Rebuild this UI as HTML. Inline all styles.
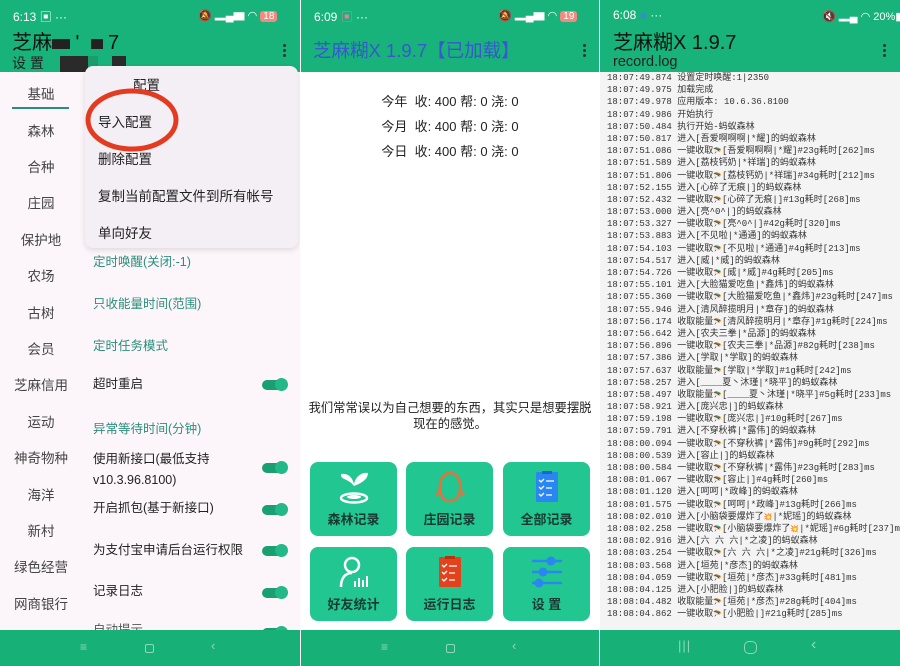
<!DOCTYPE html>
<html><head><meta charset="utf-8"><style>
*{margin:0;padding:0;box-sizing:border-box}
body{width:900px;height:666px;overflow:hidden;background:#fff;font-family:"Liberation Sans","Noto Sans CJK SC",sans-serif;position:relative}
.p{position:absolute;top:0;height:666px;width:300px;overflow:hidden}
.a{position:absolute;white-space:nowrap}
.hdr{position:absolute;left:0;top:0;width:300px;height:72px;background:#17b37a}
.nav{position:absolute;left:0;top:630px;width:300px;height:36px;background:#17b077}
.st{position:absolute;top:8px;left:13px;color:#fff;font-size:12px}
.dots{position:absolute;right:14px;top:42px;width:3px}
.dots i{display:block;width:3px;height:3px;background:#333;border-radius:50%;margin-bottom:2px}
.side{position:absolute;left:0;width:82px;text-align:center;font-size:13.5px;color:#444}
.sec{position:absolute;left:93px;font-size:12.5px;color:#2b8f7c}
.it{position:absolute;left:93px;font-size:12.5px;color:#222;line-height:21px}
.tg{position:absolute;left:262px;width:24px;height:10px;border-radius:5px;background:#1aa070}
.tg:after{content:"";position:absolute;right:-2px;top:-2px;width:13px;height:13px;border-radius:50%;background:#23b887}
.tile{position:absolute;width:87px;height:74px;background:#22c690;border-radius:8px}
.tile span{position:absolute;left:0;width:100%;top:47px;text-align:center;font-size:13px;color:#173b33;font-weight:bold}
.tile svg{position:absolute;left:28px;top:8px}
.log{position:absolute;left:7px;top:72px;font-family:"Liberation Mono","Noto Sans CJK SC",monospace;font-size:9px;color:#333;white-space:pre}
.log div{height:12.2px;line-height:12.2px;overflow:visible}
.log b{font-weight:normal;font-size:7px;line-height:0}
</style></head><body>

<!-- Panel 1 -->
<div class="p" style="left:0;background:#fcf6fa">
<div class="hdr"></div>
<div class="st">6:13 ▣ ···</div>
<div class="a" style="left:198px;top:7px;color:#fff;font-size:11px">🔕 ▂▄▆ ◠ <span style="background:#f28a80;border-radius:3px;padding:0 3px;font-size:10px">18</span></div>
<div class="a" style="left:12px;top:26px;font-size:20px;color:#111">芝麻<span style="display:inline-block;width:18px;height:10px;background:#222"></span> ' &nbsp;<span style="display:inline-block;width:12px;height:10px;background:#222"></span> 7</div>
<div class="a" style="left:12px;top:53px;font-size:14px;color:#222">设 置 <span style="display:inline-block;width:28px;height:16px;background:#2a2a2a;vertical-align:middle;margin-left:12px"></span><span style="display:inline-block;width:10px;height:16px;background:#1c9b6c;vertical-align:middle"></span><span style="display:inline-block;width:14px;height:16px;background:#2a2a2a;vertical-align:middle;margin-left:14px"></span></div>
<div class="dots" style="top:44px"><i></i><i></i><i></i></div>
<div style="position:absolute;left:12px;top:107px;width:57px;height:2px;background:#2a8f7a"></div>
<div class="side" style="top:83px">基础</div>
<div class="side" style="top:120px">森林</div>
<div class="side" style="top:156px">合种</div>
<div class="side" style="top:192px">庄园</div>
<div class="side" style="top:229px">保护地</div>
<div class="side" style="top:265px">农场</div>
<div class="side" style="top:302px">古树</div>
<div class="side" style="top:338px">会员</div>
<div class="side" style="top:374px">芝麻信用</div>
<div class="side" style="top:411px">运动</div>
<div class="side" style="top:447px">神奇物种</div>
<div class="side" style="top:484px">海洋</div>
<div class="side" style="top:520px">新村</div>
<div class="side" style="top:556px">绿色经营</div>
<div class="side" style="top:593px">网商银行</div>
<div style="position:absolute;left:85px;top:66px;width:213px;height:182px;background:#f4eff4;border-radius:8px;box-shadow:0 2px 6px rgba(0,0,0,.12)"></div>
<div class="a" style="left:133px;top:74px;font-size:13.5px;color:#222">配置</div>
<div class="a" style="left:98px;top:111px;font-size:13.5px;color:#222">导入配置</div>
<div class="a" style="left:98px;top:148px;font-size:13.5px;color:#222">删除配置</div>
<div class="a" style="left:98px;top:185px;font-size:13.5px;color:#222">复制当前配置文件到所有帐号</div>
<div class="a" style="left:98px;top:222px;font-size:13.5px;color:#222">单向好友</div>
<svg class="a" style="left:84px;top:86px" width="96" height="68"><ellipse cx="48" cy="34" rx="44" ry="29" fill="none" stroke="#e33a22" stroke-width="5"/></svg>
<div class="sec" style="top:251px">定时唤醒(关闭:-1)</div>
<div class="sec" style="top:293px">只收能量时间(范围)</div>
<div class="sec" style="top:335px">定时任务模式</div>
<div class="it" style="top:374px">超时重启</div><div class="tg" style="top:380px"></div>
<div class="sec" style="top:418px">异常等待时间(分钟)</div>
<div class="it" style="top:449px">使用新接口(最低支持<br>v10.3.96.8100)</div><div class="tg" style="top:463px"></div>
<div class="it" style="top:498px">开启抓包(基于新接口)</div><div class="tg" style="top:505px"></div>
<div class="it" style="top:540px">为支付宝申请后台运行权限</div><div class="tg" style="top:546px"></div>
<div class="it" style="top:581px">记录日志</div><div class="tg" style="top:588px"></div>
<div class="it" style="top:620px;color:#555">自动提示</div><div class="tg" style="top:628px"></div>
<div class="nav"></div>
<div class="a" style="left:80px;top:640px;color:#8fd9b9;font-size:12px">≡</div>
<div class="a" style="left:145px;top:644px;width:9px;height:9px;border:1.5px solid #8fd9b9;border-radius:2px"></div>
<div class="a" style="left:211px;top:638px;color:#8fd9b9;font-size:13px">‹</div>
</div>

<!-- Panel 2 -->
<div class="p" style="left:301px;width:298px">
<div class="hdr"></div>
<div class="st">6:09 <span style="color:#f07aa0">▣</span> ···</div>
<div class="a" style="left:197px;top:7px;color:#fff;font-size:11px">🔕 ▂▄▆ ◠ <span style="background:#f28a80;border-radius:3px;padding:0 3px;font-size:10px">19</span></div>
<div class="a" style="left:12px;top:37px;font-size:18.5px;color:#3a56d0">芝麻糊X 1.9.7【已加载】</div>
<div class="dots" style="top:44px;right:13px"><i></i><i></i><i></i></div>
<div class="a" style="left:0;width:298px;text-align:center;top:89px;font-size:13px;color:#222;line-height:25px">今年&nbsp; 收: 400 帮: 0 浇: 0<br>今月&nbsp; 收: 400 帮: 0 浇: 0<br>今日&nbsp; 收: 400 帮: 0 浇: 0</div>
<div class="a" style="left:0;width:298px;text-align:center;top:400px;font-size:12.3px;color:#222;line-height:16px;white-space:normal;padding:0 4px">我们常常误以为自己想要的东西，其实只是想要摆脱现在的感觉。</div>
<div class="tile" style="left:9px;top:462px"><svg width="32" height="34" viewBox="0 0 32 34"><path d="M16 26 V14 M16 16 C10 8 2 10 3 4 C9 3 14 6 16 14 M16 14 C18 5 25 2 30 3 C30 9 24 13 16 16" fill="#fff"/><ellipse cx="16" cy="28" rx="13" ry="4.5" fill="none" stroke="#fff" stroke-width="2.5"/><ellipse cx="16" cy="27" rx="7" ry="2" fill="#fff"/></svg><span>森林记录</span></div>
<div class="tile" style="left:105px;top:462px"><svg width="32" height="34" viewBox="0 0 32 34"><path d="M16 3 C8 3 5 12 6 20 C7 28 11 31 16 31 C21 31 25 28 26 20 C27 12 24 3 16 3Z M6 20 L2 26 M26 20 L30 26" fill="none" stroke="#e8703a" stroke-width="2.5"/></svg><span>庄园记录</span></div>
<div class="tile" style="left:202px;top:462px"><svg width="32" height="34" viewBox="0 0 32 34"><rect x="5" y="2" width="22" height="30" rx="1" fill="#2a86f0"/><rect x="11" y="1" width="10" height="3" fill="#1b66c8"/><path d="M8 10l2 2 3-3M8 17l2 2 3-3M8 24l2 2 3-3M15 11h8M15 18h6M15 25h6" stroke="#fff" stroke-width="1.3" fill="none"/></svg><span>全部记录</span></div>
<div class="tile" style="left:9px;top:547px"><svg width="32" height="34" viewBox="0 0 32 34"><circle cx="14" cy="10" r="7" fill="none" stroke="#fff" stroke-width="2.5"/><path d="M3 32 C3 22 8 18 14 18" fill="none" stroke="#fff" stroke-width="2.5"/><path d="M17 32v-6M21 32v-9M25 32v-7M29 32v-11" stroke="#fff" stroke-width="2"/></svg><span>好友统计</span></div>
<div class="tile" style="left:105px;top:547px"><svg width="32" height="34" viewBox="0 0 32 34"><rect x="5" y="2" width="22" height="30" rx="1" fill="#e2431c"/><rect x="11" y="1" width="10" height="3" fill="#b83010"/><path d="M8 10l2 2 3-3M8 17l2 2 3-3M8 24l2 2 3-3M15 11h8M15 18h6M15 25h6" stroke="#fff" stroke-width="1.3" fill="none"/></svg><span>运行日志</span></div>
<div class="tile" style="left:202px;top:547px"><svg width="32" height="34" viewBox="0 0 32 34"><path d="M1 6h30M1 17h30M1 28h30" stroke="#2a86f0" stroke-width="2.5"/><circle cx="20" cy="6" r="4.5" fill="#2a86f0"/><circle cx="12" cy="17" r="4.5" fill="#2a86f0"/><circle cx="8" cy="28" r="4.5" fill="#2a86f0"/></svg><span>设 置</span></div>
<div class="nav"></div>
<div class="a" style="left:80px;top:640px;color:#8fd9b9;font-size:12px">≡</div>
<div class="a" style="left:145px;top:644px;width:9px;height:9px;border:1.5px solid #8fd9b9;border-radius:2px"></div>
<div class="a" style="left:211px;top:638px;color:#8fd9b9;font-size:13px">‹</div>
</div>

<!-- Panel 3 -->
<div class="p" style="left:600px;background:#f4f4f4">
<div class="hdr"></div>
<div class="st">6:08 <span style="color:#4a7ce8">●</span> ···</div>
<div class="a" style="left:222px;top:8px;color:#fff;font-size:11px">🔇 ▂▄ ◠ 20%▮</div>
<div class="a" style="left:13px;top:26px;font-size:20px;color:#111">芝麻糊X 1.9.7</div>
<div class="a" style="left:13px;top:54px;font-size:14.5px;color:#222">record.log</div>
<div class="dots" style="top:44px"><i></i><i></i><i></i></div>
<div class="log"><div>18:07:49.874 设置定时唤醒:1|2350</div><div>18:07:49.975 加载完成</div><div>18:07:49.978 应用版本: 10.6.36.8100</div><div>18:07:49.986 开始执行</div><div>18:07:50.484 执行开始-蚂蚁森林</div><div>18:07:50.817 进入[吾爱啊啊啊|*耀]的蚂蚁森林</div><div>18:07:51.086 一键收取<b>🪂</b>[吾爱啊啊啊|*耀]#23g耗时[262]ms</div><div>18:07:51.589 进入[荔枝钙奶|*祥瑞]的蚂蚁森林</div><div>18:07:51.806 一键收取<b>🪂</b>[荔枝钙奶|*祥瑞]#34g耗时[212]ms</div><div>18:07:52.155 进入[心碎了无痕|]的蚂蚁森林</div><div>18:07:52.432 一键收取<b>🪂</b>[心碎了无痕|]#13g耗时[268]ms</div><div>18:07:53.000 进入[亮^0^|]的蚂蚁森林</div><div>18:07:53.327 一键收取<b>🪂</b>[亮^0^|]#42g耗时[320]ms</div><div>18:07:53.883 进入[不见啦|*通通]的蚂蚁森林</div><div>18:07:54.103 一键收取<b>🪂</b>[不见啦|*通通]#4g耗时[213]ms</div><div>18:07:54.517 进入[威|*威]的蚂蚁森林</div><div>18:07:54.726 一键收取<b>🪂</b>[威|*威]#4g耗时[205]ms</div><div>18:07:55.101 进入[大脸猫爱吃鱼|*鑫炜]的蚂蚁森林</div><div>18:07:55.360 一键收取<b>🪂</b>[大脸猫爱吃鱼|*鑫炜]#23g耗时[247]ms</div><div>18:07:55.946 进入[清风醉揽明月|*章存]的蚂蚁森林</div><div>18:07:56.174 收取能量<b>🪂</b>[清风醉揽明月|*章存]#1g耗时[224]ms</div><div>18:07:56.642 进入[农夫三拳|*品源]的蚂蚁森林</div><div>18:07:56.896 一键收取<b>🪂</b>[农夫三拳|*品源]#82g耗时[238]ms</div><div>18:07:57.386 进入[学取|*学取]的蚂蚁森林</div><div>18:07:57.637 收取能量<b>🪂</b>[学取|*学取]#1g耗时[242]ms</div><div>18:07:58.257 进入[____夏丶沐瑾|*晓平]的蚂蚁森林</div><div>18:07:58.497 收取能量<b>🪂</b>[____夏丶沐瑾|*晓平]#5g耗时[233]ms</div><div>18:07:58.921 进入[庞兴忠|]的蚂蚁森林</div><div>18:07:59.198 一键收取<b>🪂</b>[庞兴忠|]#10g耗时[267]ms</div><div>18:07:59.791 进入[不穿秋裤|*露伟]的蚂蚁森林</div><div>18:08:00.094 一键收取<b>🪂</b>[不穿秋裤|*露伟]#9g耗时[292]ms</div><div>18:08:00.539 进入[容止|]的蚂蚁森林</div><div>18:08:00.584 一键收取<b>🪂</b>[不穿秋裤|*露伟]#23g耗时[283]ms</div><div>18:08:01.067 一键收取<b>🪂</b>[容止|]#4g耗时[260]ms</div><div>18:08:01.120 进入[呵呵|*政峰]的蚂蚁森林</div><div>18:08:01.575 一键收取<b>🪂</b>[呵呵|*政峰]#13g耗时[266]ms</div><div>18:08:02.010 进入[小脑袋要爆炸了<b>💥</b>|*妮瑶]的蚂蚁森林</div><div>18:08:02.258 一键收取<b>🪂</b>[小脑袋要爆炸了<b>💥</b>|*妮瑶]#6g耗时[237]ms</div><div>18:08:02.916 进入[六 六 六|*之凌]的蚂蚁森林</div><div>18:08:03.254 一键收取<b>🪂</b>[六 六 六|*之凌]#21g耗时[326]ms</div><div>18:08:03.568 进入[垣苑|*彦杰]的蚂蚁森林</div><div>18:08:04.059 一键收取<b>🪂</b>[垣苑|*彦杰]#33g耗时[481]ms</div><div>18:08:04.125 进入[小肥脸|]的蚂蚁森林</div><div>18:08:04.482 收取能量<b>🪂</b>[垣苑|*彦杰]#28g耗时[404]ms</div><div>18:08:04.862 一键收取<b>🪂</b>[小肥脸|]#21g耗时[285]ms</div></div>
<div class="nav"></div>
<div class="a" style="left:78px;top:638px;color:#8fd9b9;font-size:13px;letter-spacing:1px">|||</div>
<div class="a" style="left:144px;top:641px;width:13px;height:13px;border:1.5px solid #8fd9b9;border-radius:5px"></div>
<div class="a" style="left:211px;top:636px;color:#8fd9b9;font-size:16px">‹</div>
</div>
</body></html>
